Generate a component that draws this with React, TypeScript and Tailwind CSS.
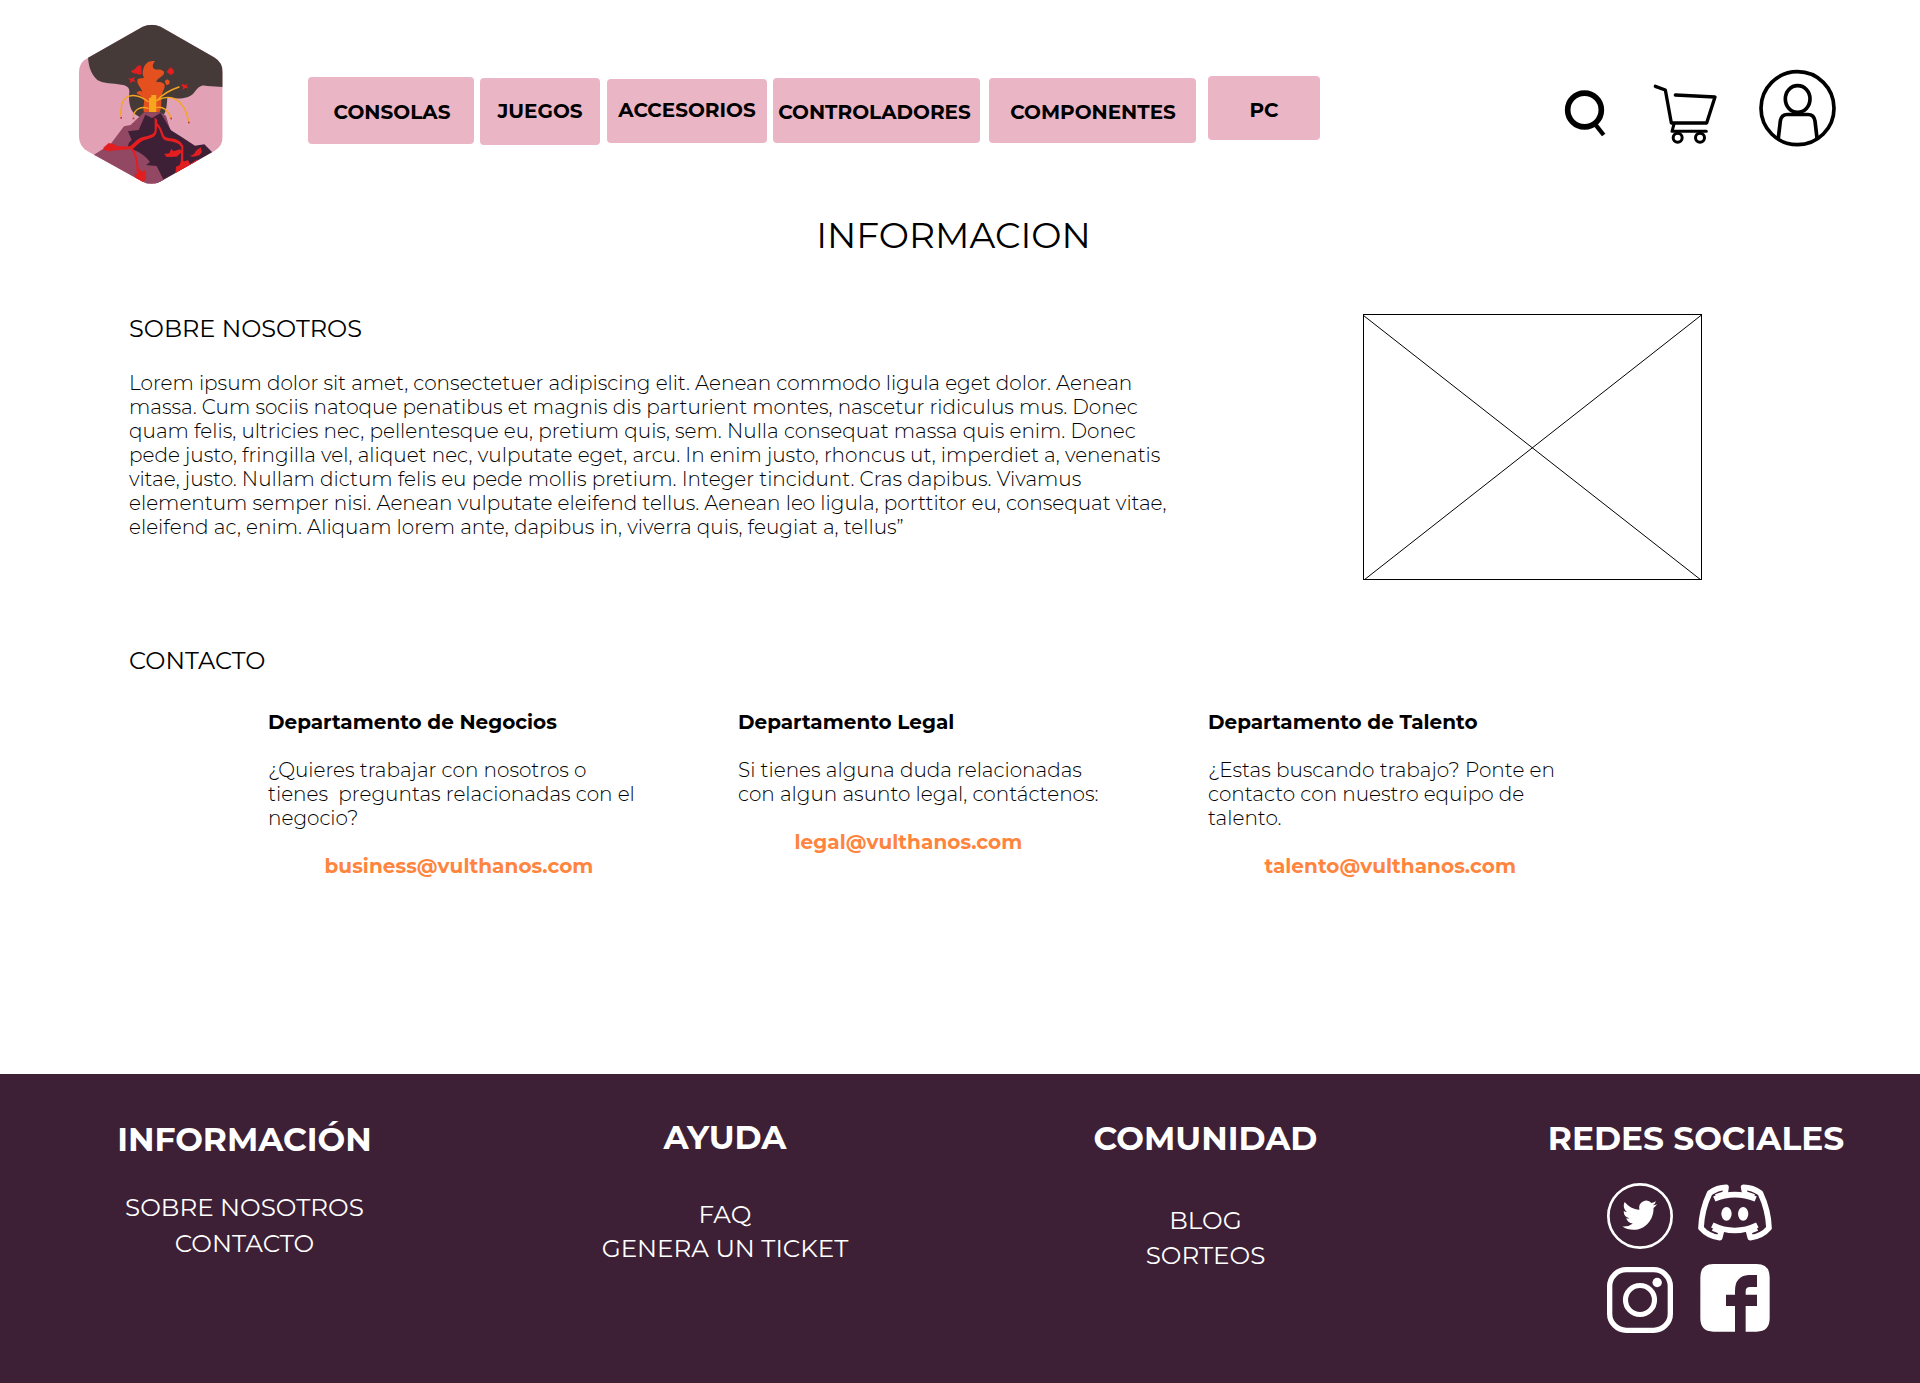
import React from "react";

const navItems = [
  { label: "CONSOLAS", box: "mt-[77px] h-[67px] w-[166px] pt-[23px] pl-[2px]" },
  { label: "JUEGOS", box: "ml-[6px] mt-[78px] h-[67px] w-[120px] pt-[21px]" },
  { label: "ACCESORIOS", box: "ml-[7px] mt-[78.5px] h-[64.5px] w-[160px] pt-[19.5px]" },
  { label: "CONTROLADORES", box: "ml-[6px] mt-[78px] h-[65px] w-[207px] pt-[22px] pr-[4px]" },
  { label: "COMPONENTES", box: "ml-[9px] mt-[78px] h-[65px] w-[207px] pt-[22px] pl-px" },
  { label: "PC", box: "ml-[12px] mt-[76px] h-[64px] w-[112px] pt-[22px]" },
];

const aboutLines = [
  "Lorem ipsum dolor sit amet, consectetuer adipiscing elit. Aenean commodo ligula eget dolor. Aenean",
  "massa. Cum sociis natoque penatibus et magnis dis parturient montes, nascetur ridiculus mus. Donec",
  "quam felis, ultricies nec, pellentesque eu, pretium quis, sem. Nulla consequat massa quis enim. Donec",
  "pede justo, fringilla vel, aliquet nec, vulputate eget, arcu. In enim justo, rhoncus ut, imperdiet a, venenatis",
  "vitae, justo. Nullam dictum felis eu pede mollis pretium. Integer tincidunt. Cras dapibus. Vivamus",
  "elementum semper nisi. Aenean vulputate eleifend tellus. Aenean leo ligula, porttitor eu, consequat vitae,",
  "eleifend ac, enim. Aliquam lorem ante, dapibus in, viverra quis, feugiat a, tellus”",
];

const departments = [
  {
    title: "Departamento de Negocios",
    lines: ["¿Quieres trabajar con nosotros o", "tienes  preguntas relacionadas con el", "negocio?"],
    email: "business@vulthanos.com",
  },
  {
    title: "Departamento Legal",
    lines: ["Si tienes alguna duda relacionadas", "con algun asunto legal, contáctenos:"],
    email: "legal@vulthanos.com",
  },
  {
    title: "Departamento de Talento",
    lines: ["¿Estas buscando trabajo? Ponte en", "contacto con nuestro equipo de", "talento."],
    email: "talento@vulthanos.com",
  },
];

const footerColumns = [
  {
    title: "INFORMACIÓN",
    links: ["SOBRE NOSOTROS", "CONTACTO"],
    column: "w-[489px] pt-[45px]",
    list: "mt-[30px] leading-[36px]",
  },
  {
    title: "AYUDA",
    links: ["FAQ", "GENERA UN TICKET"],
    column: "w-[472px] pt-[43px]",
    list: "mt-[40px] leading-[34px]",
  },
  {
    title: "COMUNIDAD",
    links: ["BLOG", "SORTEOS"],
    column: "w-[489px] pt-[44px]",
    list: "mt-[45px] leading-[35px]",
  },
];

function Logo() {
  return (
    <svg viewBox="0 0 540 570" className="mt-[10px] h-[190px] w-[180px] shrink-0">
      <defs>
        <clipPath id="hexagon">
          <path d="M248 50Q275 38 302 50L462 142Q488 157 488 187V380Q488 408 464 422L300 515Q274 528 248 515L83 424Q57 408 57 380V187Q57 157 83 144Z" />
        </clipPath>
      </defs>
      <g clipPath="url(#hexagon)">
        <rect width="540" height="570" fill="#e3a1b6" />
        <path
          d="M84 0V142C86 172 94 194 112 210C132 222 158 219 184 224C202 226 209 234 208 246C205 278 210 302 228 314L240 322H300C316 316 320 300 322 262C350 268 386 268 402 248C416 230 424 223 442 228L492 231V0Z"
          fill="#453a38"
        />
        <path
          d="M250 176C256 158 270 150 285 154C274 166 277 178 290 179C304 176 318 184 310 194C302 203 288 208 289 217C300 214 316 218 314 230C312 242 304 250 304 264C304 284 304 298 298 307H252C247 292 256 276 250 264C244 254 230 255 230 248C234 242 242 242 247 245C244 234 228 222 233 208C240 202 249 208 252 202C247 196 247 186 250 176Z"
          fill="#e5501f"
        />
        <path d="M267 264L274 262V255H289V307H267Z" fill="#f5a51e" />
        <g fill="none" stroke="#f5a51e" strokeWidth="4" strokeLinecap="round">
          <path d="M265 275C226 246 178 246 183 318" />
          <path d="M265 295C246 288 222 296 220 320" />
          <path d="M290 272C308 252 330 240 357 231" />
          <path d="M290 272C332 250 370 264 386 332" />
          <path d="M290 293C308 288 324 300 332 322" />
        </g>
        <g fill="#c8352f">
          <rect x="181" y="321" width="5" height="5" />
          <rect x="218" y="323" width="5" height="5" />
          <rect x="331" y="323" width="5" height="5" />
          <rect x="384" y="335" width="5" height="5" />
        </g>
        <g fill="#e31e21">
          <path d="M212 184L224 178L232 169Q240 162 244 170L245 192Q238 196 232 191L220 190Z" />
          <path d="M320 186L327 176L332 172L341 180L342 189L332 195Z" />
          <path d="M204 205L214 206L224 200L222 209L227 215L218 214L209 220L211 211Z" />
          <path d="M367 221L375 226L382 221L380 229L385 235L376 234L367 239L370 231L364 227Z" />
        </g>
        <path d="M314 213L322 208L329 213L328 222L319 226Z" fill="#e5501f" />
        <path d="M252 307H300L318 317L330 358L300 440L100 436L152 402L192 349L212 345Z" fill="#924763" />
        <path
          d="M256 314L276 324L302 309L333 361L366 382L405 407L433 403L470 440L300 530L200 420L207 398L215 390L204 364L236 360Z"
          fill="#3d1f36"
        />
        <path d="M95 440C130 414 190 410 215 418C240 426 258 440 270 456L258 465L290 468L312 512L250 540Z" fill="#924763" />
        <g fill="#e31e21">
          <path d="M284 322L292 330L290 366C286 386 262 386 248 392C232 400 224 418 208 418L150 422V411L208 409C220 404 226 390 246 382C262 376 282 376 284 362Z" />
          <path d="M288 336C308 352 306 372 316 381C334 388 358 382 370 408L370 462H362L364 412C356 394 332 396 314 390C300 380 304 356 286 344Z" />
          <path d="M212 416L218 414C234 434 234 460 238 486H230C230 460 226 434 212 416Z" />
          <path d="M130 413L146 399L164 403L170 408L190 410L164 418L150 424L132 420Z" />
          <path d="M226 512L224 488L232 492L238 476L246 486L256 480L258 510L240 520Z" />
          <path d="M312 432L328 430L334 416L340 424L360 418L366 426L350 440L320 441Z" />
          <path d="M346 492L348 470L358 466L364 452L374 454L384 450L390 462L412 448L408 464L380 480Z" />
          <path d="M390 438L402 432L408 422L422 412L426 426L418 436L400 440Z" />
        </g>
      </g>
    </svg>
  );
}

function SearchIcon() {
  return (
    <svg viewBox="72 117 126 144" className="ml-[244px] mt-[89px] h-[48px] w-[42px] shrink-0" fill="none" stroke="black">
      <circle cx="133.5" cy="180" r="50.5" strokeWidth="17" />
      <path d="M164 221L191 255" strokeWidth="13" />
    </svg>
  );
}

function CartIcon() {
  return (
    <svg
      viewBox="336 99 198 186"
      className="ml-[46px] mt-[83px] h-[62px] w-[66px] shrink-0"
      fill="none"
      stroke="black"
      strokeWidth="10"
      strokeLinecap="round"
      strokeLinejoin="round"
    >
      <path d="M346 109L376 120L394 219H500L525 141L406 135" />
      <path d="M402 222L396 244H499" strokeWidth="9" />
      <circle cx="413" cy="263" r="13.5" strokeWidth="9" />
      <circle cx="480" cy="263" r="13.5" strokeWidth="9" />
    </svg>
  );
}

function UserIcon() {
  return (
    <svg viewBox="657 57 231 237" className="ml-[41px] mt-[69px] h-[79px] w-[77px] shrink-0" fill="none" stroke="black" strokeWidth="11">
      <circle cx="772.5" cy="174.5" r="109.5" />
      <ellipse cx="773" cy="147" rx="37" ry="40" />
      <path d="M715 264L721 213Q724 193.500 742 193.500H804Q822 193.500 825 213L831 264" />
    </svg>
  );
}

function TwitterIcon() {
  return (
    <svg viewBox="261 249 198 198" className="h-[66px] w-[66px]">
      <circle cx="360" cy="348" r="95" fill="none" stroke="white" strokeWidth="8" />
      <g transform="translate(307 292) scale(4.34 4.48)">
        <path
          fill="white"
          d="M23.953 4.570a10 10 0 01-2.825.775 4.958 4.958 0 002.163-2.723c-.951.555-2.005.959-3.127 1.184a4.920 4.920 0 00-8.384 4.482C7.690 8.095 4.067 6.130 1.640 3.162a4.822 4.822 0 00-.666 2.475c0 1.710.870 3.213 2.188 4.096a4.904 4.904 0 01-2.228-.616v.060a4.923 4.923 0 003.946 4.827 4.996 4.996 0 01-2.212.085 4.936 4.936 0 004.604 3.417 9.867 9.867 0 01-6.102 2.105c-.390 0-.779-.023-1.170-.067a13.995 13.995 0 007.557 2.209c9.053 0 13.998-7.496 13.998-13.985 0-.210 0-.420-.015-.630A9.935 9.935 0 0024 4.590z"
        />
      </g>
    </svg>
  );
}

function DiscordIcon() {
  return (
    <svg viewBox="534 252 222 174" className="mt-px h-[58px] w-[74px]">
      <g fill="none" stroke="white" strokeWidth="17">
        <path d="M583 297Q644 271 707 297" />
        <path d="M577 375Q644 408 712 375" />
        <path d="M588 291L615 282L618 262Q592 262 569 279Q545 330 543 384Q564 409 599 413L604 394L579 384" strokeLinejoin="round" />
        <path d="M702 291L675 282L671 262Q698 262 721 279Q745 330 747 384Q726 409 691 413L686 394L711 384" strokeLinejoin="round" />
      </g>
      <ellipse cx="619.500" cy="341.500" rx="15.500" ry="20.500" fill="white" />
      <ellipse cx="669.500" cy="341.500" rx="15.500" ry="20.500" fill="white" />
    </svg>
  );
}

function InstagramIcon() {
  return (
    <svg viewBox="261 501 198 198" className="h-[66px] w-[66px]">
      <rect x="269" y="509" width="182" height="182" rx="50" fill="none" stroke="white" strokeWidth="16" />
      <circle cx="360" cy="600" r="43.500" fill="none" stroke="white" strokeWidth="15.500" />
      <circle cx="411.500" cy="547.500" r="14" fill="white" />
    </svg>
  );
}

function FacebookIcon() {
  return (
    <svg viewBox="540 492 210 204" className="-mt-[3px] ml-[2px] h-[68px] w-[70px]">
      <path
        fill="white"
        d="M580 492H710Q749 492 749 532V655Q749 695 710 695H677V618H711V584H677V574Q677 561 690 561H711V525H686Q645 528 645 572V584H618V618H645V695H580Q541 695 541 655V532Q541 492 580 492Z"
      />
    </svg>
  );
}

export default function App() {
  return (
    <div className="flex h-[1383px] w-[1920px] flex-col overflow-hidden bg-white font-['Montserrat',sans-serif] text-black">
      <header className="flex h-[213px] shrink-0 items-start pl-[60px]">
        <Logo />
        <nav className="ml-[68px] flex items-start">
          {navItems.map((item) => (
            <a key={item.label} className={`flex shrink-0 justify-center rounded bg-[#eab5c5] text-[20px] leading-[24px] font-bold ${item.box}`}>
              {item.label}
            </a>
          ))}
        </nav>
        <SearchIcon />
        <CartIcon />
        <UserIcon />
      </header>

      <main className="flex flex-1 flex-col">
        <h1 className="pr-[13px] text-center text-[36px] leading-[44px]">INFORMACION</h1>

        <section className="mt-[57px] flex items-start pl-[129px]">
          <div className="w-[1234px]">
            <h2 className="text-[24px] leading-[29px]">SOBRE NOSOTROS</h2>
            <p className="mt-[28px] text-[20px] leading-[24px] font-light">
              {aboutLines.map((line) => (
                <span key={line} className="block whitespace-nowrap">
                  {line}
                </span>
              ))}
            </p>
          </div>
          <svg viewBox="0 0 339 266" className="h-[266px] w-[339px]" fill="none" stroke="black">
            <rect x="0.5" y="0.5" width="338" height="265" />
            <path d="M0.5 1.500L338 266M338.500 1L1 266" />
          </svg>
        </section>

        <section className="mt-[66px] pl-[129px]">
          <h2 className="text-[24px] leading-[29px] tracking-[0.05px]">CONTACTO</h2>
          <div className="mt-[35px] ml-[139px] flex items-start text-[20px] leading-[24px]">
            {departments.map((department) => (
              <article key={department.title} className="w-[470px]">
                <h3 className="font-bold">{department.title}</h3>
                <p className="mt-6 font-light">
                  {department.lines.map((line) => (
                    <span key={line} className="block whitespace-pre">
                      {line}
                    </span>
                  ))}
                </p>
                <a className="mt-6 ml-[56.5px] block font-bold tracking-[0.05px] text-[#ff843d]">{department.email}</a>
              </article>
            ))}
          </div>
        </section>
      </main>

      <footer className="flex h-[309px] shrink-0 items-start bg-[#3d1f36] text-white">
        {footerColumns.map((column) => (
          <div key={column.title} className={`text-center ${column.column}`}>
            <h2 className="text-[32.8px] leading-[40px] font-bold">{column.title}</h2>
            <ul className={`text-[24.6px] ${column.list}`}>
              {column.links.map((link) => (
                <li key={link}>{link}</li>
              ))}
            </ul>
          </div>
        ))}
        <div className="w-[470px] pt-[44px]">
          <h2 className="pl-[22px] text-center text-[32.8px] leading-[40px] font-bold">REDES SOCIALES</h2>
          <div className="mt-[25px] ml-[157px] grid w-[165px] grid-cols-[66px_74px] items-start gap-x-[25px] gap-y-[18px]">
            <TwitterIcon />
            <DiscordIcon />
            <InstagramIcon />
            <FacebookIcon />
          </div>
        </div>
      </footer>
    </div>
  );
}
